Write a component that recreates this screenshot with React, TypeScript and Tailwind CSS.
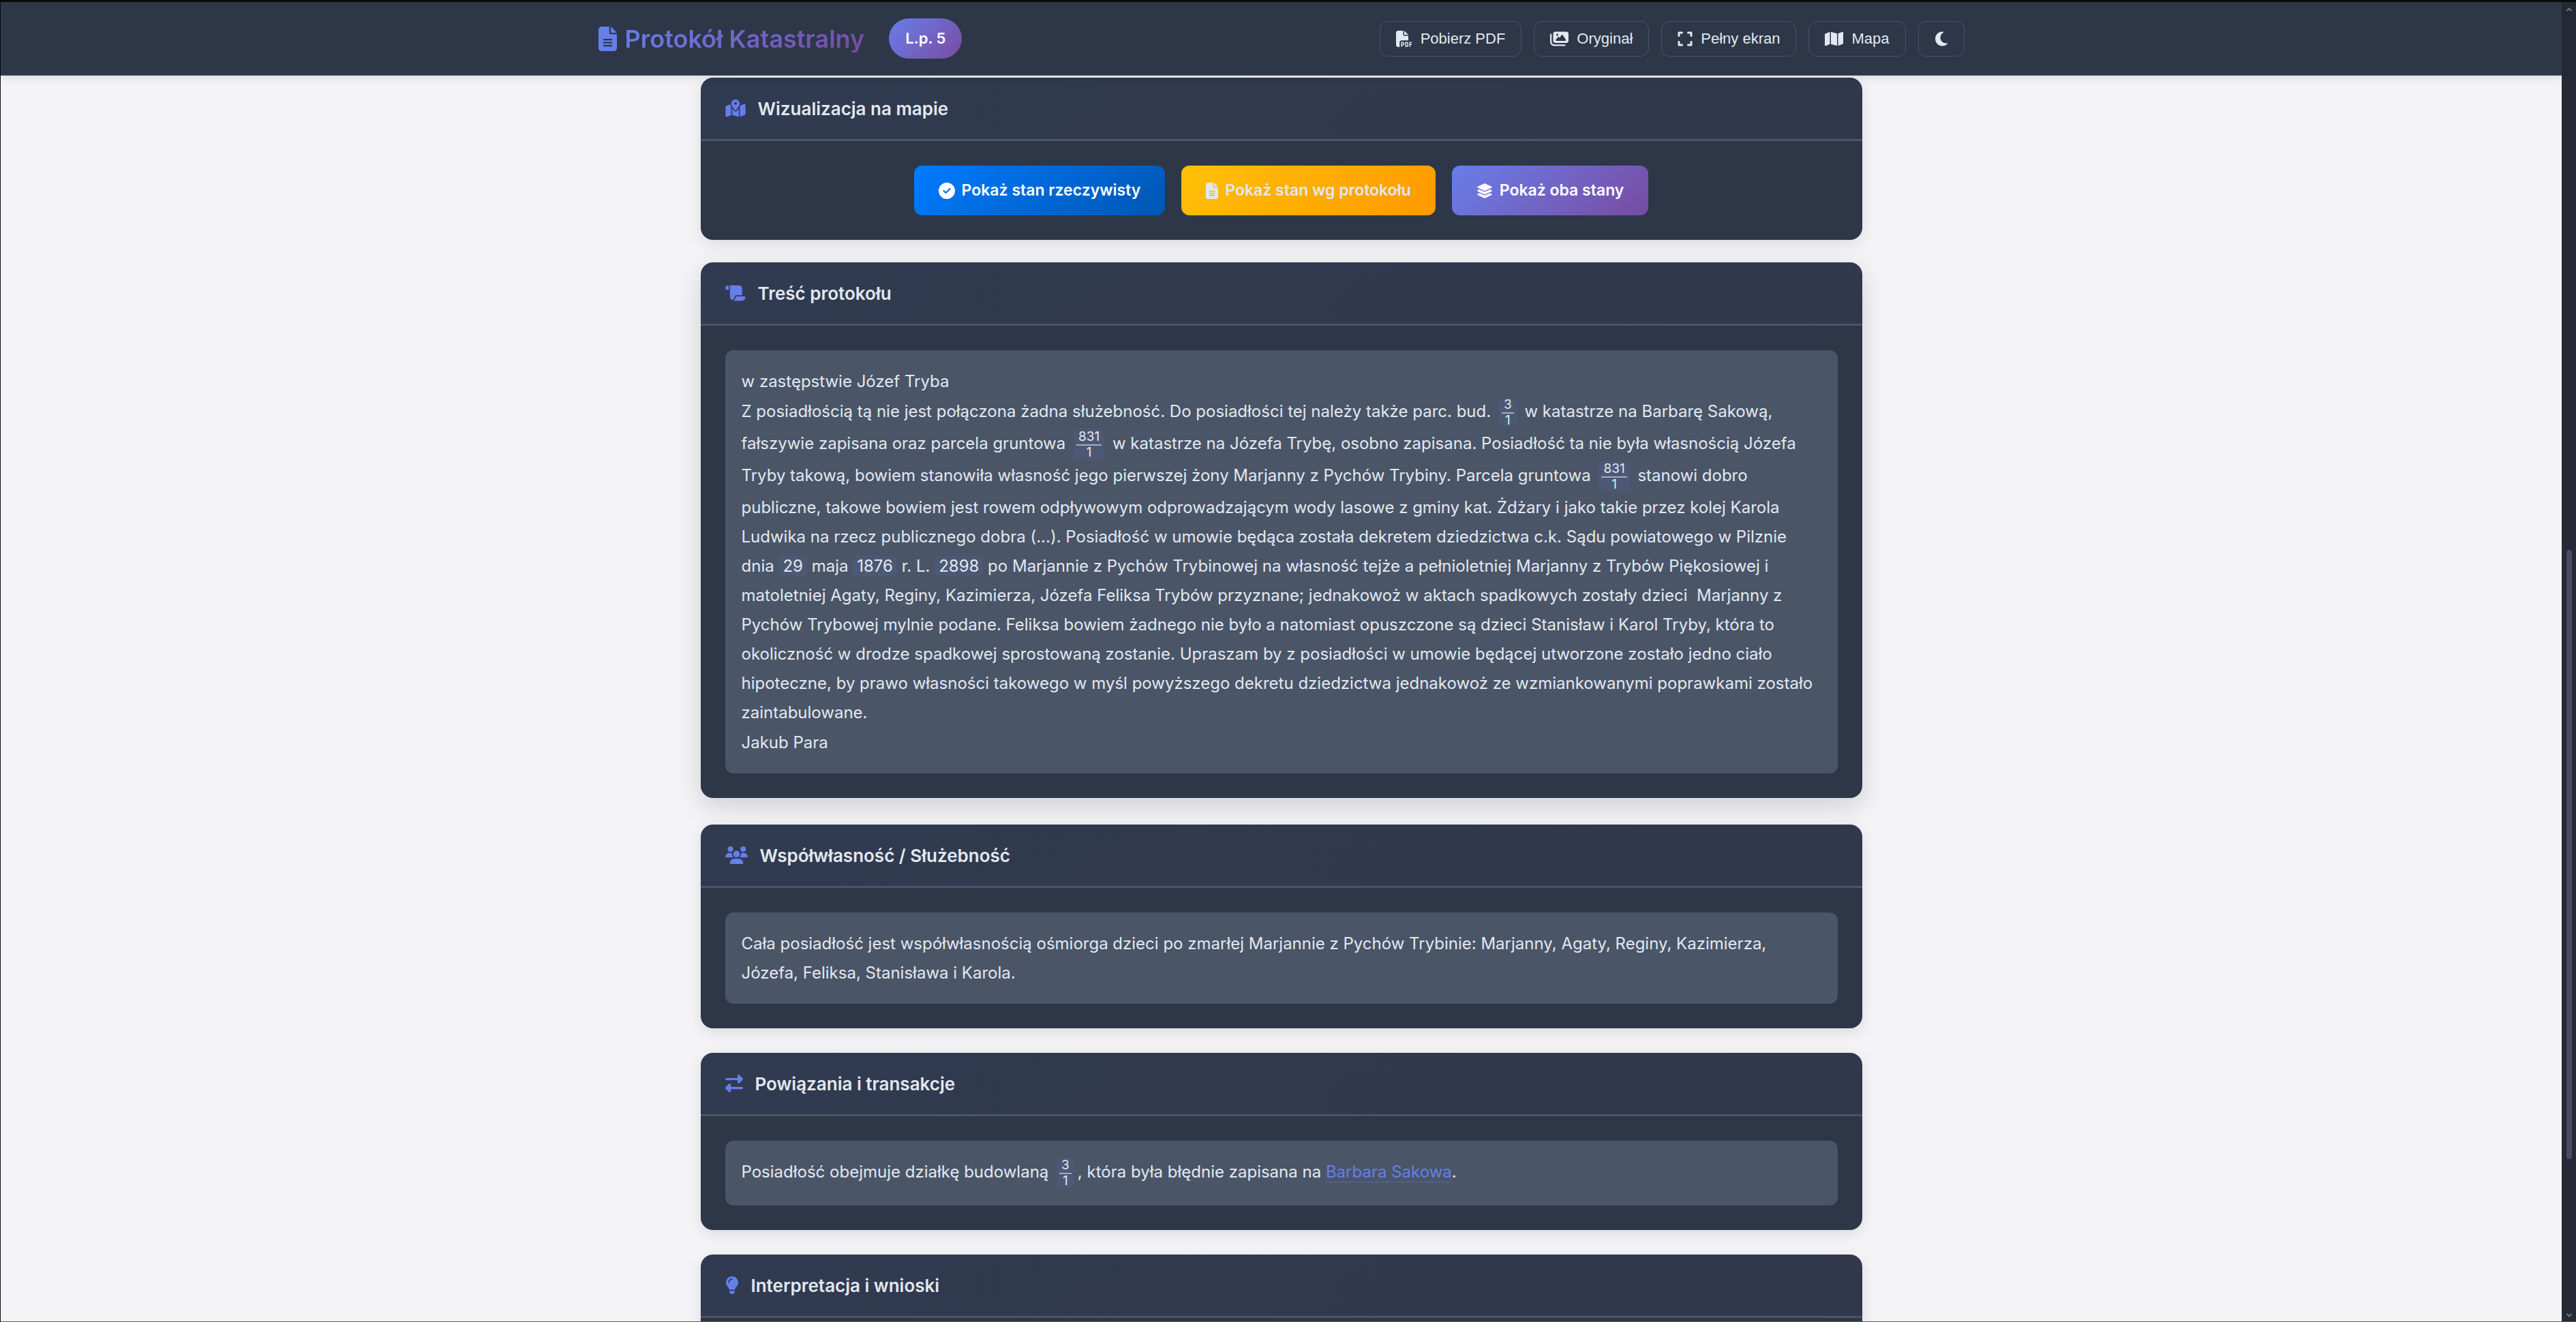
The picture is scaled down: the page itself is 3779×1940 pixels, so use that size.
import type { ReactNode } from "react";
import {
  FaCircleCheck,
  FaExpand,
  FaFileLines,
  FaFilePdf,
  FaImages,
  FaLayerGroup,
  FaLightbulb,
  FaMap,
  FaMapLocationDot,
  FaMoon,
  FaRightLeft,
  FaScroll,
  FaUsers,
} from "react-icons/fa6";

function Fraction({ top, bottom }: { top: string; bottom: string }) {
  return (
    <span className="mx-[5px] mt-px mb-0.5 inline-flex flex-col items-center rounded-md bg-[#667eea]/10 px-1 py-px text-center align-middle text-[19px] leading-[19px]">
      <span className="w-full border-b-2 border-[#a0aec0] px-[3px] pb-0.5">{top}</span>
      <span className="px-[3px]">{bottom}</span>
    </span>
  );
}

function Num({ children }: { children: ReactNode }) {
  return <span className="rounded-md bg-[#667eea]/10 px-1.5">{children}</span>;
}

function Card({
  icon,
  title,
  raised,
  children,
}: {
  icon: ReactNode;
  title: string;
  raised?: boolean;
  children: ReactNode;
}) {
  return (
    <section
      className={
        raised
          ? "relative -top-[3px] rounded-[18px] bg-[#2d3748] shadow-[0_12px_38px_rgba(0,0,0,0.15)]"
          : "rounded-[18px] bg-[#2d3748] shadow-[0_6px_22px_rgba(0,0,0,0.1)]"
      }
    >
      <h2 className="flex h-[93px] items-center gap-[18px] rounded-t-[18px] border-b-[3px] border-[#4a5568] bg-linear-135 from-[#667eea]/5 to-[#764ba2]/5 px-9 text-[26px] font-semibold">
        <span className="text-[#667eea]">{icon}</span>
        {title}
      </h2>
      <div className="p-9">{children}</div>
    </section>
  );
}

function TextBox({ children }: { children: ReactNode }) {
  return (
    <div className="flex flex-col gap-px rounded-xl bg-[#4a5568] p-6 text-2xl leading-[43px]">{children}</div>
  );
}

const toolButton =
  "flex h-13 items-center gap-3 rounded-xl border border-[#4a5568] px-[23px] font-['Liberation_Sans',sans-serif] text-[22px]";
const mapButton = "flex h-[73px] items-center gap-2.5 rounded-xl px-9 text-[23px] font-semibold";

export default function App() {
  return (
    <div className="flex h-screen flex-col overflow-hidden border-t-[3px] border-b border-l border-[#0a0a0b] border-b-[#5a5a5c] bg-[#f4f4f7] font-['Inter',sans-serif] text-[#e2e8f0]">
      <div className="flex min-h-0 flex-1">
        <div className="flex min-w-0 flex-1 flex-col">
          <header className="z-10 shrink-0 border-b border-[#4a5568] bg-[#2d3748] shadow-[0_3px_15px_rgba(0,0,0,0.1)]">
            <div className="mx-auto flex h-[107px] max-w-[2004px] items-center justify-between">
              <div className="flex items-center gap-9">
                <h1 className="flex items-center gap-3 text-4xl font-semibold">
                  <FaFileLines className="h-9 w-[27px] text-[#667eea]" />
                  <span className="bg-linear-135 from-[#667eea] to-[#764ba2] bg-clip-text text-transparent">
                    Protokół Katastralny
                  </span>
                </h1>
                <span className="flex h-[59px] items-center rounded-full bg-linear-135 from-[#667eea] to-[#764ba2] px-6 text-[22px] font-semibold text-white">
                  L.p. 5
                </span>
              </div>
              <nav className="flex items-center gap-[18px]">
                <button className={toolButton}>
                  <FaFilePdf className="size-6" />
                  Pobierz PDF
                </button>
                <button className={toolButton}>
                  <FaImages className="h-6 w-[27px]" />
                  Oryginał
                </button>
                <button className={toolButton}>
                  <FaExpand className="h-6 w-[22px]" />
                  Pełny ekran
                </button>
                <button className={toolButton}>
                  <FaMap className="h-6 w-[27px]" />
                  Mapa
                </button>
                <button className={toolButton} aria-label="Tryb ciemny">
                  <FaMoon className="h-6 w-5" />
                </button>
              </nav>
            </div>
          </header>

          <main className="min-h-0 flex-1 overflow-hidden pt-[3px]">
            <div className="mx-auto flex max-w-[1704px] flex-col gap-9">
              <Card icon={<FaMapLocationDot className="h-[26px] w-[30px]" />} title="Wizualizacja na mapie">
                <div className="flex justify-center gap-6">
                  <button className={`${mapButton} bg-linear-135 from-[#007bff] to-[#0056b3] text-white`}>
                    <FaCircleCheck className="size-6" />
                    Pokaż stan rzeczywisty
                  </button>
                  <button className={`${mapButton} bg-linear-135 from-[#ffc107] to-[#ff9800]`}>
                    <FaFileLines className="h-6 w-[18px]" />
                    Pokaż stan wg protokołu
                  </button>
                  <button className={`${mapButton} bg-linear-135 from-[#667eea] to-[#764ba2] text-white`}>
                    <FaLayerGroup className="size-6" />
                    Pokaż oba stany
                  </button>
                </div>
              </Card>

              <Card raised icon={<FaScroll className="h-[26px] w-[30px]" />} title="Treść protokołu">
                <TextBox>
                  <p>w zastępstwie Józef Tryba</p>
                  <p>
                    Z posiadłością tą nie jest połączona żadna służebność. Do posiadłości tej należy także parc. bud.{" "}
                    <Fraction top="3" bottom="1" /> w katastrze na Barbarę Sakową, fałszywie zapisana oraz parcela
                    gruntowa <Fraction top="831" bottom="1" /> w katastrze na Józefa Trybę, osobno zapisana. Posiadłość
                    ta nie była własnością Józefa Tryby takową, bowiem stanowiła własność jego pierwszej żony Marjanny z
                    Pychów Trybiny. Parcela gruntowa <Fraction top="831" bottom="1" /> stanowi dobro publiczne, takowe
                    bowiem jest rowem odpływowym odprowadzającym wody lasowe z gminy kat. Żdżary i jako takie przez
                    kolej Karola Ludwika na rzecz publicznego dobra (...). Posiadłość w umowie będąca została dekretem
                    dziedzictwa c.k. Sądu powiatowego w Pilznie dnia <Num>29</Num> maja <Num>1876</Num> r. L.{" "}
                    <Num>2898</Num> po Marjannie z Pychów Trybinowej na własność tejże a pełnioletniej Marjanny z Trybów
                    Piękosiowej i matoletniej Agaty, Reginy, Kazimierza, Józefa Feliksa Trybów przyznane; jednakowoż w
                    aktach spadkowych zostały dzieci &nbsp;Marjanny z Pychów Trybowej mylnie podane. Feliksa bowiem
                    żadnego nie było a natomiast opuszczone są dzieci Stanisław i Karol Tryby, która to okoliczność w
                    drodze spadkowej sprostowaną zostanie. Upraszam by z posiadłości w umowie będącej utworzone zostało
                    jedno ciało hipoteczne, by prawo własności takowego w myśl powyższego dekretu dziedzictwa jednakowoż
                    ze wzmiankowanymi poprawkami zostało zaintabulowane.
                  </p>
                  <p>Jakub Para</p>
                </TextBox>
              </Card>

              <Card icon={<FaUsers className="h-[26px] w-[33px]" />} title="Współwłasność / Służebność">
                <TextBox>
                  <p>
                    Cała posiadłość jest współwłasnością ośmiorga dzieci po zmarłej Marjannie z Pychów Trybinie:
                    Marjanny, Agaty, Reginy, Kazimierza, Józefa, Feliksa, Stanisława i Karola.
                  </p>
                </TextBox>
              </Card>

              <Card icon={<FaRightLeft className="size-[26px]" />} title="Powiązania i transakcje">
                <TextBox>
                  <p>
                    Posiadłość obejmuje działkę budowlaną <Fraction top="3" bottom="1" />, która była błędnie zapisana
                    na{" "}
                    <a href="#barbara-sakowa" className="border-b border-dotted border-[#667eea] text-[#667eea]">
                      Barbara Sakowa
                    </a>
                    .
                  </p>
                </TextBox>
              </Card>

              <Card icon={<FaLightbulb className="h-[26px] w-5" />} title="Interpretacja i wnioski">
                <TextBox>
                  <p>&nbsp;</p>
                </TextBox>
              </Card>
            </div>
          </main>
        </div>

        <div className="flex w-[21px] shrink-0 flex-col items-center bg-[#252a36]">
          <svg viewBox="0 0 8 6" className="mt-2 h-1.5 w-2 shrink-0" fill="none" stroke="#77777a" strokeWidth="2">
            <path d="M0.5 5 4 1.5 7.5 5" />
          </svg>
          <div className="grow-[789]" />
          <div className="w-2 grow-[892] rounded-sm bg-[#4a4c66]" />
          <div className="grow-[226]" />
          <svg viewBox="0 0 8 6" className="mb-1.5 h-1.5 w-2 shrink-0" fill="none" stroke="#77777a" strokeWidth="2">
            <path d="M0.5 1 4 4.5 7.5 1" />
          </svg>
        </div>
      </div>
    </div>
  );
}
